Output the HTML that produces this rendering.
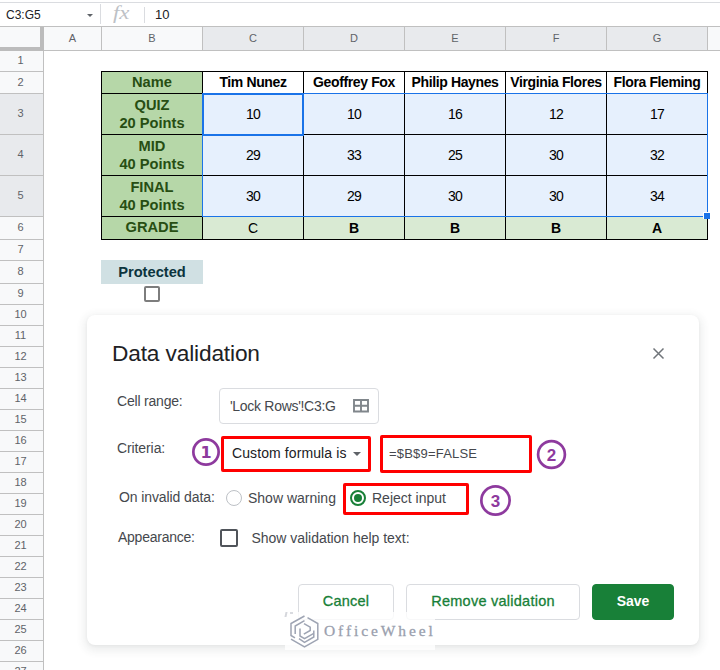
<!DOCTYPE html>
<html><head><meta charset="utf-8"><title>Data validation</title>
<style>
*{box-sizing:border-box;margin:0;padding:0}
html,body{width:720px;height:670px;overflow:hidden;background:#fff;font-family:"Liberation Sans",Arial,sans-serif}
.abs{position:absolute}
#root{position:relative;width:720px;height:670px;overflow:hidden;background:#fff}
.ch{position:absolute;top:27px;height:23px;color:#5f6368;font-size:11px;line-height:23px;text-align:center}
.rh{position:absolute;left:0;width:41px;color:#5f6368;font-size:11px;text-align:center}
.cell{position:absolute;display:flex;align-items:center;justify-content:center;text-align:center;font-size:14px;letter-spacing:-0.7px;color:#000;line-height:18px;white-space:nowrap;padding-bottom:1px}
.g{background:#b6d7a8;color:#274e13;font-weight:bold;font-size:14.67px;letter-spacing:0;padding-top:0}
.n{font-weight:bold;font-size:14px;letter-spacing:-0.37px;padding-bottom:2px}
.b{background:#e6f0fd}
.gr{background:#d9ead3;font-weight:bold;font-size:14px;letter-spacing:0;padding-top:0}
.k{position:absolute;background:#000}
.lbl{position:absolute;font-size:14px;color:#45484d;line-height:16px;white-space:nowrap}
.red{position:absolute;border:3px solid #ff0000;border-radius:2px}
.circ{position:absolute;width:27px;height:27px;border:2px solid #7b2d8e;border-radius:50%;color:#8e3a9d;font-weight:bold;font-size:15px;line-height:23px;text-align:center;font-family:"DejaVu Sans","Liberation Sans",sans-serif}
.btn{position:absolute;height:36px;border:1px solid #dadce0;border-radius:4px;background:#fff;color:#188038;font-size:14.5px;letter-spacing:0.25px;line-height:32px;text-align:center;white-space:nowrap;-webkit-text-stroke:0.3px #188038}
</style></head><body><div id="root">

<div class="abs" style="left:0;top:2px;width:720px;height:1px;background:#dadce0"></div>
<div class="abs" style="left:0;top:26px;width:720px;height:1px;background:#c0c0c0"></div>
<div class="abs" style="left:6px;top:8px;font-size:12px;color:#202124;line-height:14px">C3:G5</div>
<div class="abs" style="left:87px;top:14px;width:0;height:0;border-left:3px solid transparent;border-right:3px solid transparent;border-top:3px solid #5f6368"></div>
<div class="abs" style="left:100px;top:4px;width:1px;height:20px;background:#dadce0"></div>
<div class="abs" style="left:113px;top:2px;font-family:'Liberation Serif',serif;font-style:italic;font-size:19px;color:#bdc1c6;line-height:22px;transform:scaleX(1.2);transform-origin:0 0">fx</div>
<div class="abs" style="left:144px;top:7px;width:1px;height:16px;background:#dadce0"></div>
<div class="abs" style="left:155px;top:7px;font-size:13px;color:#202124;line-height:15px">10</div>

<div class="abs" style="left:0;top:27px;width:720px;height:23px;background:#f8f9fa"></div>
<div class="abs" style="left:203px;top:27px;width:505px;height:23px;background:#e8eaed"></div>
<div class="abs" style="left:0;top:50px;width:720px;height:1px;background:#c0c0c0"></div>
<div class="ch" style="left:44px;width:57px">A</div>
<div class="ch" style="left:102px;width:100px">B</div>
<div class="ch" style="left:203px;width:100px">C</div>
<div class="ch" style="left:304px;width:100px">D</div>
<div class="ch" style="left:405px;width:100px">E</div>
<div class="ch" style="left:506px;width:100px">F</div>
<div class="ch" style="left:607px;width:100px">G</div>
<div class="abs" style="left:101px;top:27px;width:1px;height:23px;background:#c0c0c0"></div>
<div class="abs" style="left:202px;top:27px;width:1px;height:23px;background:#c0c0c0"></div>
<div class="abs" style="left:303px;top:27px;width:1px;height:23px;background:#c0c0c0"></div>
<div class="abs" style="left:404px;top:27px;width:1px;height:23px;background:#c0c0c0"></div>
<div class="abs" style="left:505px;top:27px;width:1px;height:23px;background:#c0c0c0"></div>
<div class="abs" style="left:606px;top:27px;width:1px;height:23px;background:#c0c0c0"></div>
<div class="abs" style="left:707px;top:27px;width:1px;height:23px;background:#c0c0c0"></div>
<div class="abs" style="left:0;top:51px;width:43px;height:619px;background:#f8f9fa"></div>
<div class="abs" style="left:0;top:94px;width:43px;height:122px;background:#e8eaed"></div>
<div class="abs" style="left:43px;top:51px;width:1px;height:619px;background:#c0c0c0"></div>
<div class="rh" style="top:50px;height:20px;line-height:20px">1</div>
<div class="abs" style="left:0;top:71px;width:43px;height:1px;background:#c0c0c0"></div>
<div class="rh" style="top:72px;height:21px;line-height:21px">2</div>
<div class="abs" style="left:0;top:93px;width:43px;height:1px;background:#c0c0c0"></div>
<div class="rh" style="top:93px;height:40px;line-height:40px">3</div>
<div class="abs" style="left:0;top:134px;width:43px;height:1px;background:#c0c0c0"></div>
<div class="rh" style="top:134px;height:40px;line-height:40px">4</div>
<div class="abs" style="left:0;top:175px;width:43px;height:1px;background:#c0c0c0"></div>
<div class="rh" style="top:175px;height:40px;line-height:40px">5</div>
<div class="abs" style="left:0;top:216px;width:43px;height:1px;background:#c0c0c0"></div>
<div class="rh" style="top:216px;height:22px;line-height:22px">6</div>
<div class="abs" style="left:0;top:239px;width:43px;height:1px;background:#c0c0c0"></div>
<div class="rh" style="top:239px;height:20px;line-height:20px">7</div>
<div class="abs" style="left:0;top:260px;width:43px;height:1px;background:#c0c0c0"></div>
<div class="rh" style="top:260px;height:22px;line-height:22px">8</div>
<div class="abs" style="left:0;top:283px;width:43px;height:1px;background:#c0c0c0"></div>
<div class="rh" style="top:283px;height:20px;line-height:20px">9</div>
<div class="abs" style="left:0;top:304px;width:43px;height:1px;background:#c0c0c0"></div>
<div class="rh" style="top:304px;height:20px;line-height:20px">10</div>
<div class="abs" style="left:0;top:325px;width:43px;height:1px;background:#c0c0c0"></div>
<div class="rh" style="top:325px;height:20px;line-height:20px">11</div>
<div class="abs" style="left:0;top:346px;width:43px;height:1px;background:#c0c0c0"></div>
<div class="rh" style="top:346px;height:20px;line-height:20px">12</div>
<div class="abs" style="left:0;top:367px;width:43px;height:1px;background:#c0c0c0"></div>
<div class="rh" style="top:367px;height:20px;line-height:20px">13</div>
<div class="abs" style="left:0;top:388px;width:43px;height:1px;background:#c0c0c0"></div>
<div class="rh" style="top:388px;height:20px;line-height:20px">14</div>
<div class="abs" style="left:0;top:409px;width:43px;height:1px;background:#c0c0c0"></div>
<div class="rh" style="top:409px;height:20px;line-height:20px">15</div>
<div class="abs" style="left:0;top:430px;width:43px;height:1px;background:#c0c0c0"></div>
<div class="rh" style="top:430px;height:20px;line-height:20px">16</div>
<div class="abs" style="left:0;top:451px;width:43px;height:1px;background:#c0c0c0"></div>
<div class="rh" style="top:451px;height:20px;line-height:20px">17</div>
<div class="abs" style="left:0;top:472px;width:43px;height:1px;background:#c0c0c0"></div>
<div class="rh" style="top:472px;height:20px;line-height:20px">18</div>
<div class="abs" style="left:0;top:493px;width:43px;height:1px;background:#c0c0c0"></div>
<div class="rh" style="top:493px;height:20px;line-height:20px">19</div>
<div class="abs" style="left:0;top:514px;width:43px;height:1px;background:#c0c0c0"></div>
<div class="rh" style="top:514px;height:20px;line-height:20px">20</div>
<div class="abs" style="left:0;top:535px;width:43px;height:1px;background:#c0c0c0"></div>
<div class="rh" style="top:535px;height:20px;line-height:20px">21</div>
<div class="abs" style="left:0;top:556px;width:43px;height:1px;background:#c0c0c0"></div>
<div class="rh" style="top:556px;height:20px;line-height:20px">22</div>
<div class="abs" style="left:0;top:577px;width:43px;height:1px;background:#c0c0c0"></div>
<div class="rh" style="top:577px;height:20px;line-height:20px">23</div>
<div class="abs" style="left:0;top:598px;width:43px;height:1px;background:#c0c0c0"></div>
<div class="rh" style="top:598px;height:20px;line-height:20px">24</div>
<div class="abs" style="left:0;top:619px;width:43px;height:1px;background:#c0c0c0"></div>
<div class="rh" style="top:619px;height:20px;line-height:20px">25</div>
<div class="abs" style="left:0;top:640px;width:43px;height:1px;background:#c0c0c0"></div>
<div class="rh" style="top:640px;height:20px;line-height:20px">26</div>
<div class="abs" style="left:0;top:661px;width:43px;height:1px;background:#c0c0c0"></div>
<div class="rh" style="top:661px;height:20px;line-height:20px">27</div>
<div class="abs" style="left:0;top:682px;width:43px;height:1px;background:#c0c0c0"></div>
<div class="rh" style="top:682px;height:20px;line-height:20px">28</div>
<div class="abs" style="left:0;top:703px;width:43px;height:1px;background:#c0c0c0"></div>
<div class="abs" style="left:0;top:27px;width:44px;height:24px;background:#f8f9fa;border-right:4px solid #bcbcbc;border-bottom:4px solid #bcbcbc"></div>
<div class="cell g" style="left:102px;top:72px;width:100px;height:21px;padding-bottom:2px;">Name</div>
<div class="cell n" style="left:203px;top:72px;width:100px;height:21px;">Tim Nunez</div>
<div class="cell n" style="left:304px;top:72px;width:100px;height:21px;">Geoffrey Fox</div>
<div class="cell n" style="left:405px;top:72px;width:100px;height:21px;">Philip Haynes</div>
<div class="cell n" style="left:506px;top:72px;width:100px;height:21px;">Virginia Flores</div>
<div class="cell n" style="left:607px;top:72px;width:100px;height:21px;">Flora Fleming</div>
<div class="abs" style="left:203px;top:94px;width:505px;height:122px;background:#e6f0fd"></div>
<div class="cell g" style="left:102px;top:94px;width:100px;height:40px;">QUIZ<br>20 Points</div>
<div class="cell " style="left:203px;top:94px;width:100px;height:40px;">10</div>
<div class="cell " style="left:304px;top:94px;width:100px;height:40px;">10</div>
<div class="cell " style="left:405px;top:94px;width:100px;height:40px;">16</div>
<div class="cell " style="left:506px;top:94px;width:100px;height:40px;">12</div>
<div class="cell " style="left:607px;top:94px;width:100px;height:40px;">17</div>
<div class="cell g" style="left:102px;top:135px;width:100px;height:40px;">MID<br>40 Points</div>
<div class="cell " style="left:203px;top:135px;width:100px;height:40px;">29</div>
<div class="cell " style="left:304px;top:135px;width:100px;height:40px;">33</div>
<div class="cell " style="left:405px;top:135px;width:100px;height:40px;">25</div>
<div class="cell " style="left:506px;top:135px;width:100px;height:40px;">30</div>
<div class="cell " style="left:607px;top:135px;width:100px;height:40px;">32</div>
<div class="cell g" style="left:102px;top:176px;width:100px;height:40px;">FINAL<br>40 Points</div>
<div class="cell " style="left:203px;top:176px;width:100px;height:40px;">30</div>
<div class="cell " style="left:304px;top:176px;width:100px;height:40px;">29</div>
<div class="cell " style="left:405px;top:176px;width:100px;height:40px;">30</div>
<div class="cell " style="left:506px;top:176px;width:100px;height:40px;">30</div>
<div class="cell " style="left:607px;top:176px;width:100px;height:40px;">34</div>
<div class="abs" style="left:102px;top:217px;width:606px;height:22px;background:#d9ead3"></div>
<div class="cell g" style="left:102px;top:217px;width:100px;height:22px;padding-bottom:2px;">GRADE</div>
<div class="cell gr" style="left:203px;top:217px;width:100px;height:22px;font-weight:normal;">C</div>
<div class="cell gr" style="left:304px;top:217px;width:100px;height:22px;">B</div>
<div class="cell gr" style="left:405px;top:217px;width:100px;height:22px;">B</div>
<div class="cell gr" style="left:506px;top:217px;width:100px;height:22px;">B</div>
<div class="cell gr" style="left:607px;top:217px;width:100px;height:22px;">A</div>
<div class="k" style="left:101px;top:71px;width:1px;height:169px"></div>
<div class="k" style="left:202px;top:71px;width:1px;height:169px"></div>
<div class="k" style="left:303px;top:71px;width:1px;height:169px"></div>
<div class="k" style="left:404px;top:71px;width:1px;height:169px"></div>
<div class="k" style="left:505px;top:71px;width:1px;height:169px"></div>
<div class="k" style="left:606px;top:71px;width:1px;height:169px"></div>
<div class="k" style="left:707px;top:71px;width:1px;height:169px"></div>
<div class="k" style="left:101px;top:71px;width:607px;height:1px"></div>
<div class="k" style="left:101px;top:93px;width:607px;height:1px"></div>
<div class="k" style="left:101px;top:134px;width:607px;height:1px"></div>
<div class="k" style="left:101px;top:175px;width:607px;height:1px"></div>
<div class="k" style="left:101px;top:216px;width:607px;height:1px"></div>
<div class="k" style="left:101px;top:239px;width:607px;height:1px"></div>
<div class="abs" style="left:202px;top:93px;width:506px;height:124px;border:1px solid #1a73e8"></div>
<div class="abs" style="left:202px;top:93px;width:102px;height:43px;border:2px solid #1a73e8"></div>
<div class="abs" style="left:703px;top:212px;width:7px;height:7px;background:#1a73e8;border-left:1px solid #fff;border-top:1px solid #fff"></div>
<div class="cell" style="left:101px;top:260px;width:102px;height:24px;padding:0;background:#d0e0e3;color:#0c343d;font-weight:bold;font-size:14.67px;letter-spacing:0">Protected</div>
<div class="abs" style="left:144px;top:286px;width:16px;height:16px;border:2px solid #7d7d7d;border-radius:2px;background:#fff"></div>
<div class="abs" style="left:87px;top:315px;width:612px;height:330px;background:#fff;border-radius:8px;box-shadow:0 1px 3px rgba(60,64,67,.06),0 3px 8px 3px rgba(60,64,67,.09)"></div>
<div class="abs" style="left:112px;top:339px;font-size:22.7px;letter-spacing:-0.15px;line-height:28px;color:#202124;white-space:nowrap">Data validation</div>
<svg class="abs" style="left:651.5px;top:346.5px" width="13" height="13" viewBox="0 0 13 13"><path d="M1.5 1.5L11.5 11.5M11.5 1.5L1.5 11.5" stroke="#70757a" stroke-width="1.5" fill="none"/></svg>
<div class="lbl" style="left:117px;top:393px;letter-spacing:-0.2px">Cell range:</div>
<div class="abs" style="left:219px;top:388px;width:160px;height:36px;border:1px solid #dadce0;border-radius:4px;background:#fff"></div>
<div class="lbl" style="left:230px;top:398px;color:#45484d;letter-spacing:-0.3px">'Lock Rows'!C3:G</div>
<svg class="abs" style="left:352.5px;top:398.5px" width="16" height="14" viewBox="0 0 16 14"><path d="M1 1h14v11.5h-14zM1 6.75h14M8 1v11.5" stroke="#80868b" stroke-width="1.9" fill="none"/></svg>
<div class="lbl" style="left:117px;top:440px;letter-spacing:-0.1px">Criteria:</div>
<div class="red" style="left:221px;top:436px;width:150px;height:36px"></div>
<div class="lbl" style="left:232px;top:445px;color:#202124;letter-spacing:0.1px">Custom formula is</div>
<div class="abs" style="left:353px;top:452px;width:0;height:0;border-left:4px solid transparent;border-right:4px solid transparent;border-top:4px solid #5f6368"></div>
<div class="red" style="left:380px;top:435px;width:152px;height:38px"></div>
<div class="lbl" style="left:389px;top:446px;font-size:13px;letter-spacing:0.2px;color:#45484d">=$B$9=FALSE</div>
<svg class="abs" style="left:190.0px;top:436.0px" width="32" height="32" viewBox="0 0 32 32"><circle cx="16.0" cy="16.0" r="12.65" fill="none" stroke="#8e3a9e" stroke-width="2.7"/><text x="16.0" y="22.0" text-anchor="middle" font-family="'DejaVu Sans','Liberation Sans',sans-serif" font-weight="bold" font-size="16" fill="#8e3a9e">1</text></svg>
<svg class="abs" style="left:535.3px;top:438.0px" width="33" height="33" viewBox="0 0 33 33"><circle cx="16.5" cy="16.5" r="13.4" fill="none" stroke="#8e3a9e" stroke-width="2.7"/><text x="16.5" y="22.5" text-anchor="middle" font-family="'Liberation Sans',sans-serif" font-weight="bold" font-size="17" fill="#8e3a9e">2</text></svg>
<svg class="abs" style="left:478.1px;top:482.7px" width="35" height="35" viewBox="0 0 35 35"><circle cx="17.5" cy="17.5" r="14.15" fill="none" stroke="#8e3a9e" stroke-width="2.7"/><text x="17.5" y="23.5" text-anchor="middle" font-family="'Liberation Sans',sans-serif" font-weight="bold" font-size="17" fill="#8e3a9e">3</text></svg>
<div class="lbl" style="left:119px;top:489px;letter-spacing:-0.1px">On invalid data:</div>
<div class="abs" style="left:226px;top:490px;width:16px;height:16px;border:1px solid #bdc1c6;border-radius:50%;background:#fff"></div>
<div class="lbl" style="left:248px;top:490px">Show warning</div>
<div class="red" style="left:343px;top:483px;width:126px;height:32px"></div>
<div class="abs" style="left:350px;top:490px;width:16px;height:16px;border:2px solid #188038;border-radius:50%;background:#fff"></div>
<div class="abs" style="left:354px;top:494px;width:8px;height:8px;border-radius:50%;background:#188038"></div>
<div class="lbl" style="left:372px;top:490px">Reject input</div>
<div class="lbl" style="left:118px;top:529px;letter-spacing:-0.25px">Appearance:</div>
<div class="abs" style="left:220px;top:529px;width:18px;height:18px;border:2px solid #50545a;border-radius:2px;background:#fff"></div>
<div class="lbl" style="left:251.5px;top:530px;letter-spacing:-0.03px">Show validation help text:</div>
<div class="btn" style="left:298px;top:584px;width:96px">Cancel</div>
<div class="btn" style="left:406px;top:584px;width:174px">Remove validation</div>
<div class="btn" style="left:592px;top:584px;width:82px;background:#188038;border-color:#188038;color:#fff;font-weight:bold;letter-spacing:0;font-size:14px;-webkit-text-stroke:0">Save</div>
<div class="abs" style="left:285px;top:612px;width:150px;height:38px;background:rgba(255,255,255,.8)"></div>
<div class="abs" style="left:285px;top:612px;width:2px;height:5px;background:#d5d7dc;transform:skewX(-12deg)"></div>
<div class="abs" style="left:290px;top:612px;width:3px;height:2px;background:#d9dbe0"></div>
<svg class="abs" style="left:288px;top:613px" width="34" height="37" viewBox="288 613 34 37"><g fill="none" stroke="#9ea4b3" stroke-width="1.5" stroke-linejoin="miter"><path d="M304.5 616L291 623.5V635.5L295 637.8"/><path d="M291 639.2L304.5 647L317.8 639.4V623.5L307.5 617.6"/><path d="M304.5 620.6L295.2 626V634"/><path d="M299 638.6L304.5 642.4L313.8 637V630.5"/><path d="M304 623.6L310.2 627.2V630.5L303.8 634.2"/><path d="M300 628.5V636L304.5 638.6L313.8 633.4"/></g></svg>
<div class="abs" style="left:324px;top:622px;font-family:'Liberation Serif',serif;font-size:15.5px;letter-spacing:2.9px;color:#9a9fae;line-height:18px;white-space:nowrap;-webkit-text-stroke:0.3px #9a9fae">OfficeWheel</div>
</div></body></html>
